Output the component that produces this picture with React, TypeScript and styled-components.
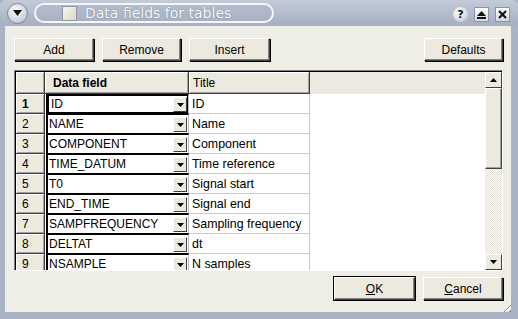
import React from 'react';
import styled, {createGlobalStyle} from 'styled-components';

const GlobalStyle = createGlobalStyle`
  html, body { margin: 0; padding: 0; background: #eeede6; }
  body { font-family: "Liberation Sans", Arial, sans-serif; font-size: 12px; }
`

const Window = styled.div`
  width: 518px;
  height: 319px;
  box-sizing: border-box;
  display: flex;
  flex-direction: column;
  background: #a9b3c4;
  overflow: hidden;`
const TitleBar = styled.div`
  height: 26px;
  flex: none;
  display: flex;
  align-items: center;
  padding: 0 8px 0 7px;
  background: linear-gradient(#c3cbd8, #a5afc1);
  border-top-left-radius: 6px;
  border-top-right-radius: 6px;
  position: relative;`
const MenuButton = styled.div`
  width: 19px;
  height: 19px;
  border-radius: 50%;
  background: radial-gradient(circle at 40% 35%, #fdfdfd, #c9cfd9 70%, #8c96a8);
  border: 1px solid #7d879a;
  display: flex;
  align-items: center;
  justify-content: center;
  flex: none;`
const TitlePill = styled.div`
  margin-left: 6px;
  width: 240px;
  height: 20px;
  border: 2px solid #f4f6f9;
  border-radius: 12px;
  box-sizing: border-box;
  display: flex;
  align-items: center;
  padding-left: 26px;
  gap: 8px;
  background: linear-gradient(#b4bdcc, #a8b2c3);`
const TitleIcon = styled.div`
  width: 13px;
  height: 13px;
  flex: none;
  border: 1px solid #8f96a2;
  background: linear-gradient(135deg, #f7f7ee, #d9d8c8);`
const TitleText = styled.span`
  font-family: "DejaVu Sans", Verdana, sans-serif;
  font-size: 14px;
  color: #fbfbfd;
  text-shadow: 0 0 1px #5f6979;
  white-space: nowrap;`
const Spacer = styled.div`
  flex: 1;`
const TitleButtons = styled.div`
  display: flex;
  gap: 6px;
  margin-top: 3px;`
const HelpButton = styled.div`
  width: 15px;
  height: 15px;
  border-radius: 50%;
  background: radial-gradient(circle at 40% 35%, #ffffff, #cdd3dd 70%, #8e98aa);
  display: flex;
  align-items: center;
  justify-content: center;
  font-family: "DejaVu Sans", sans-serif;
  font-weight: bold;
  font-size: 11px;
  color: #111;`
const SquareButton = styled.div`
  width: 15px;
  height: 15px;
  box-sizing: border-box;
  background: linear-gradient(#ffffff, #d5dae2);
  border: 1px solid #8994a6;
  display: flex;
  align-items: center;
  justify-content: center;`
const Body = styled.div`
  flex: 1;
  margin: 0 7px 7px 5px;
  background: #eeede6;
  display: flex;
  flex-direction: column;
  padding: 12px 8px 0 9px;
  position: relative;`
const ButtonRow = styled.div`
  display: flex;
  gap: 8px;
  height: 23px;`
const Button = styled.button<{ $w?: number; $default?: boolean }>`
  width: ${p => p.$w ?? 80}px;
  height: 23px;
  box-sizing: border-box;
  padding: 0;
  background: #ece9df;
  font-family: "Liberation Sans", Arial, sans-serif;
  font-size: 12px;
  color: #000;
  border: 1px solid;
  border-color: #ffffff #404040 #404040 #ffffff;
  box-shadow: ${p => p.$default ? '0 0 0 1px #000, inset -1px -1px 0 #808080' : 'inset -1px -1px 0 #808080, 1px 1px 0 #000'};
  u { text-decoration: underline; }`
const Table = styled.div`
  margin-top: 9px;
  height: 201px;
  box-sizing: border-box;
  border: 1px solid;
  border-color: #808080 #ffffff #ffffff #808080;
  box-shadow: inset 1px 1px 0 #000;
  padding: 1px 0 0 1px;
  display: flex;
  background: #fff;
  overflow: hidden;`
const Grid = styled.div`
  flex: 1;
  display: grid;
  grid-template-columns: 29px 144px 121px 1fr;
  grid-auto-rows: 20px;
  grid-template-rows: 22px;
  align-content: start;
  overflow: hidden;`
const HeaderCell = styled.div<{ $bold?: boolean }>`
  background: #ece9df;
  border-right: 1px solid #404040;
  border-bottom: 1px solid #404040;
  box-shadow: inset 1px 1px 0 #ffffff, inset -1px -1px 0 #a0a0a0;
  display: flex;
  align-items: center;
  padding-left: ${p => p.$bold ? 8 : 4}px;
  font-weight: ${p => p.$bold ? 'bold' : 'normal'};
  font-size: 12px;`
const HeaderFill = styled.div`
  background: #ece9df;`
const RowNum = styled.div<{ $bold?: boolean }>`
  background: #ece9df;
  border-right: 1px solid #404040;
  border-bottom: 1px solid #404040;
  box-shadow: inset 1px 1px 0 #ffffff, inset -1px -1px 0 #a0a0a0;
  display: flex;
  align-items: center;
  padding-left: 6px;
  font-weight: ${p => p.$bold ? 'bold' : 'normal'};`
const ComboCell = styled.div<{ $focus?: boolean }>`
  display: flex;
  align-items: stretch;
  box-sizing: border-box;
  background: #fff;
  border-top: 1px solid #000;
  border-left: 2px solid #000;
  border-bottom: 1px solid #000;
  border-right: 1px solid #c0c0c0;
  margin-left: 1px;
  box-shadow: ${p => p.$focus ? 'inset 1px 1px 0 #000, inset -1px -1px 0 #000' : 'none'};
  padding-left: ${p => p.$focus ? 3 : 1}px;`
const ComboText = styled.div`
  flex: 1;
  display: flex;
  align-items: center;
  font-size: 12px;`
const ComboArrow = styled.div`
  width: 14px;
  margin: 2px 1px 1px 0;
  background: #ece9df;
  border: 1px solid;
  border-color: #ffffff #404040 #404040 #ffffff;
  box-sizing: border-box;
  display: flex;
  align-items: center;
  justify-content: center;`
const TextCell = styled.div`
  display: flex;
  align-items: center;
  padding-left: 3px;
  border-right: 1px solid #c8c8c8;
  border-bottom: 1px solid #c8c8c8;
  font-size: 12.4px;
  white-space: nowrap;`
const EmptyCell = styled.div`
  background: #fff;`
const ScrollBar = styled.div`
  width: 17px;
  flex: none;
  display: flex;
  flex-direction: column;
  background-color: #f4f3ee;
  background-image: repeating-conic-gradient(#e4e2d8 0 25%, #fafaf6 0 50%);
  background-size: 2px 2px;`
const ScrollButton = styled.div`
  height: 16px;
  flex: none;
  box-sizing: border-box;
  background: #ece9df;
  border: 1px solid;
  border-color: #ffffff #404040 #404040 #ffffff;
  display: flex;
  align-items: center;
  justify-content: center;`
const Thumb = styled.div`
  height: 81px;
  box-sizing: border-box;
  background: #ece9df;
  border: 1px solid;
  border-color: #ffffff #404040 #404040 #ffffff;
  box-shadow: inset -1px -1px 0 #a0a0a0;`
const Footer = styled.div`
  display: flex;
  justify-content: flex-end;
  gap: 8px;
  margin-top: 6px;`
const Grip = styled.div`
  position: absolute;
  right: 0;
  bottom: 0;
  width: 11px;
  height: 11px;
  background: repeating-linear-gradient(135deg, transparent 0 2px, #8a8a8a 2px 3px, #ffffff 3px 4px);
  clip-path: polygon(100% 0, 100% 100%, 0 100%);`

const DownArrow = () => (
    <svg width="7" height="4" viewBox="0 0 7 4">
        <polygon points="0,0 7,0 3.5,4" fill="#000"/>
    </svg>
)
const UpArrow = () => (
    <svg width="7" height="4" viewBox="0 0 7 4">
        <polygon points="0,4 7,4 3.5,0" fill="#000"/>
    </svg>
)

const rows = [
    ['ID', 'ID'],
    ['NAME', 'Name'],
    ['COMPONENT', 'Component'],
    ['TIME_DATUM', 'Time reference'],
    ['T0', 'Signal start'],
    ['END_TIME', 'Signal end'],
    ['SAMPFREQUENCY', 'Sampling frequency'],
    ['DELTAT', 'dt'],
    ['NSAMPLE', 'N samples'],
]

const App = () => {
    return (
        <>
            <GlobalStyle/>
            <Window>
                <TitleBar>
                    <MenuButton>
                        <svg width="9" height="6" viewBox="0 0 9 6">
                            <polygon points="0,0 9,0 4.5,6" fill="#111"/>
                        </svg>
                    </MenuButton>
                    <TitlePill>
                        <TitleIcon/>
                        <TitleText>Data fields for tables</TitleText>
                    </TitlePill>
                    <Spacer/>
                    <TitleButtons>
                        <HelpButton>?</HelpButton>
                        <SquareButton>
                            <svg width="9" height="8" viewBox="0 0 9 8">
                                <polygon points="0,5 9,5 4.5,0" fill="#111"/>
                                <rect x="0" y="6" width="9" height="2" fill="#111"/>
                            </svg>
                        </SquareButton>
                        <SquareButton>
                            <svg width="9" height="9" viewBox="0 0 9 9">
                                <path d="M1 1 L8 8 M8 1 L1 8" stroke="#111" strokeWidth="2.2"/>
                            </svg>
                        </SquareButton>
                    </TitleButtons>
                </TitleBar>
                <Body>
                    <ButtonRow>
                        <Button>Add</Button>
                        <Button $w={79}>Remove</Button>
                        <Button $w={81}>Insert</Button>
                        <Spacer/>
                        <Button $w={79}>Defaults</Button>
                    </ButtonRow>
                    <Table>
                        <Grid>
                            <HeaderCell/>
                            <HeaderCell $bold>Data field</HeaderCell>
                            <HeaderCell>Title</HeaderCell>
                            <HeaderFill/>
                            {rows.map(([field, title], i) => (
                                <React.Fragment key={field}>
                                    <RowNum $bold={i === 0}>{i + 1}</RowNum>
                                    <ComboCell $focus={i === 0}>
                                        <ComboText>{field}</ComboText>
                                        <ComboArrow><DownArrow/></ComboArrow>
                                    </ComboCell>
                                    <TextCell>{title}</TextCell>
                                    <EmptyCell/>
                                </React.Fragment>
                            ))}
                        </Grid>
                        <ScrollBar>
                            <ScrollButton><UpArrow/></ScrollButton>
                            <Thumb/>
                            <Spacer/>
                            <ScrollButton><DownArrow/></ScrollButton>
                        </ScrollBar>
                    </Table>
                    <Footer>
                        <Button $w={81} $default><u>O</u>K</Button>
                        <Button $w={80}><u>C</u>ancel</Button>
                    </Footer>
                    <Grip/>
                </Body>
            </Window>
        </>
    );
};

export default App;
